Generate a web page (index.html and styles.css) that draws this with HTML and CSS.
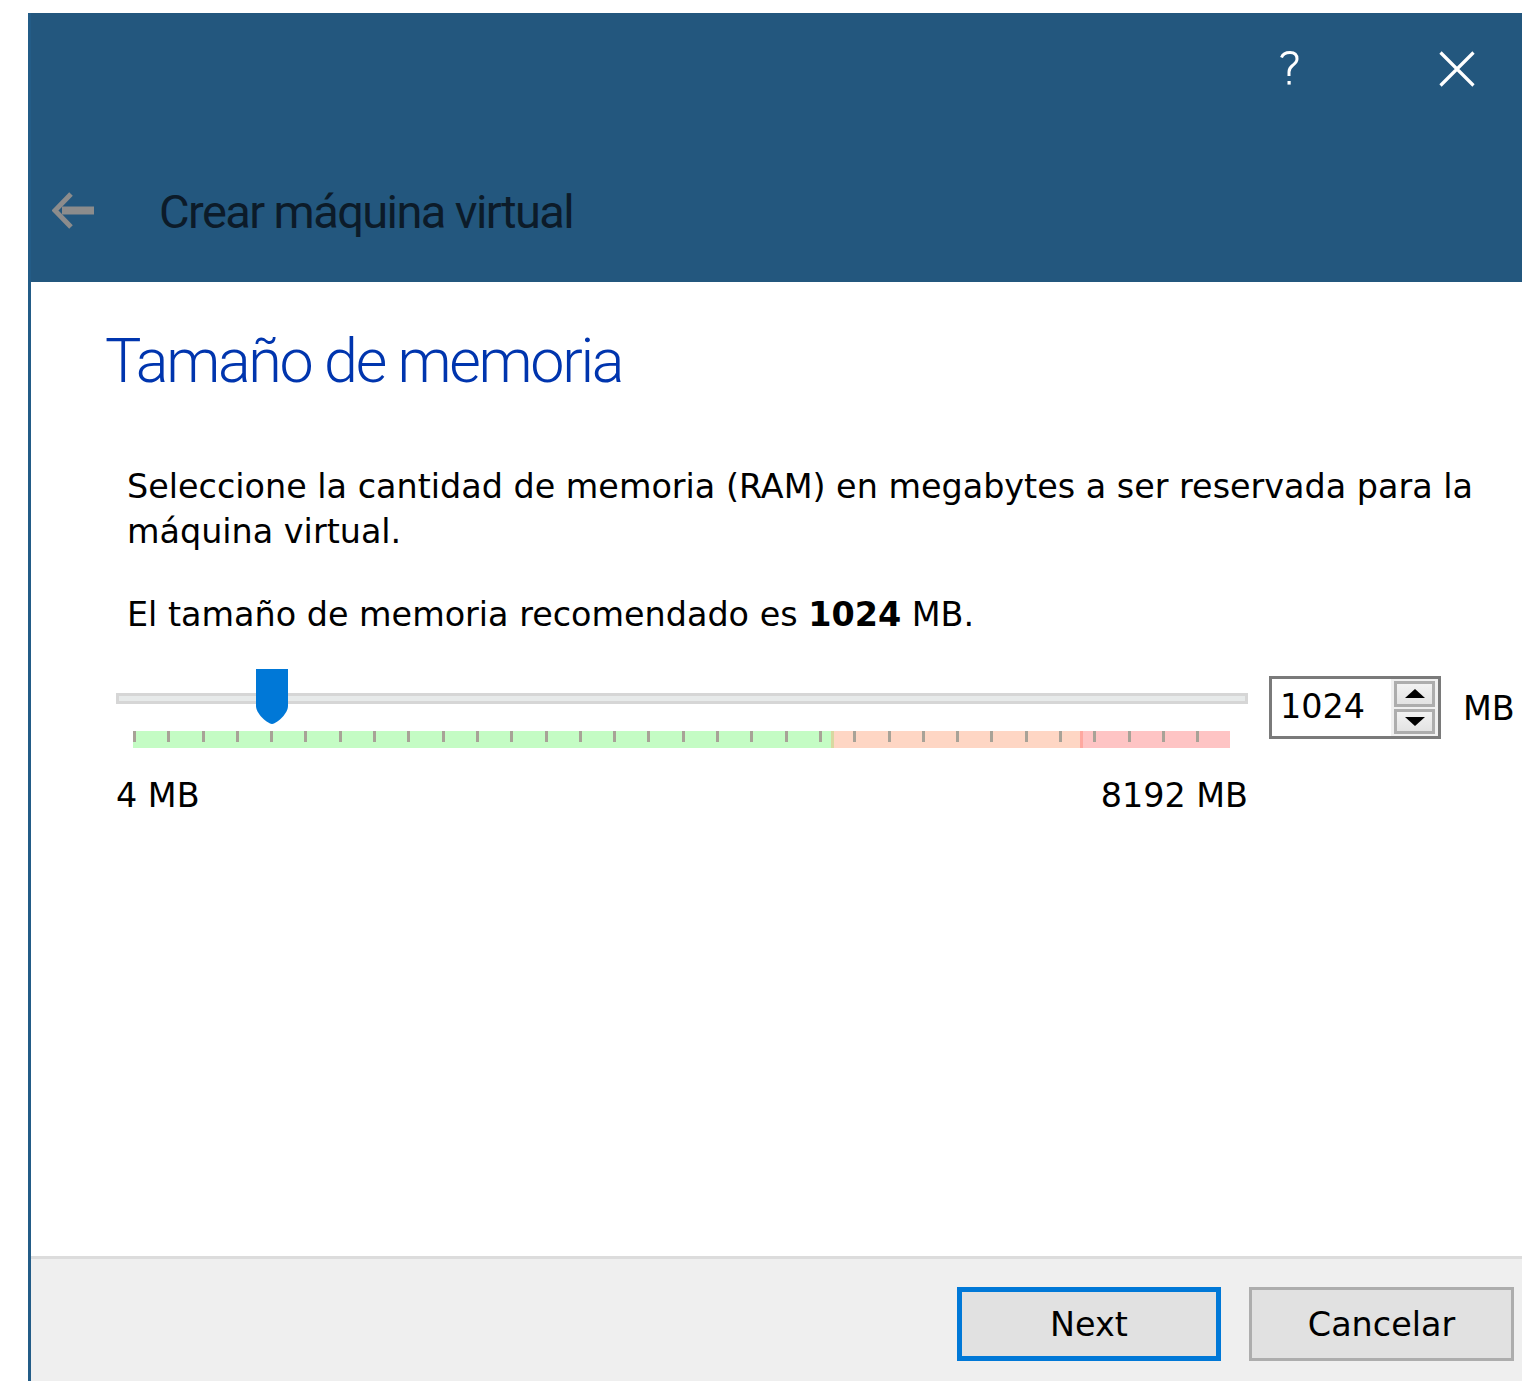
FILE: index.html
```html
<!DOCTYPE html>
<html lang="es">
<head>
<meta charset="utf-8">
<title>Crear máquina virtual</title>
<link rel="stylesheet" href="styles.css">
</head>
<body>
<div class="dialog">
  <header class="wizard-header">
    <div class="caption-buttons">
      <button class="caption-btn help" aria-label="Ayuda">
        <svg width="20" height="36" viewBox="0 0 20 36">
          <path d="M2.5 6.5 C4 2.5 8 1.5 11 1.5 C15.5 1.5 18 4 18 8 C18 11 16 12.5 13.5 14.5 C11 16.5 10 18 10 21 V25" fill="none" stroke="#fff" stroke-width="3"/>
          <rect x="8.5" y="30" width="3.2" height="3.6" fill="#fff"/>
        </svg>
      </button>
      <button class="caption-btn close" aria-label="Cerrar">
        <svg width="36" height="36" viewBox="0 0 36 36">
          <path d="M1.5 1.5 L34.5 34.5 M34.5 1.5 L1.5 34.5" stroke="#fff" stroke-width="3.2" fill="none"/>
        </svg>
      </button>
    </div>
    <div class="header-title-row">
      <button class="back-btn" aria-label="Atrás">
        <svg width="44" height="40" viewBox="0 0 44 40">
          <path d="M10 18.5 H42" stroke="#8c8c8c" stroke-width="8" fill="none"/>
          <path d="M19 2 L3 18.5 L19 35" stroke="#8c8c8c" stroke-width="5" fill="none" stroke-linejoin="miter"/>
        </svg>
      </button>
      <span class="header-title">Crear máquina virtual</span>
    </div>
  </header>

  <main class="page">
    <h1 class="page-title">Tamaño de memoria</h1>
    <p class="text">Seleccione la cantidad de memoria (RAM) en megabytes a ser reservada para la máquina virtual.</p>
    <p class="text recommended">El tamaño de memoria recomendado es <b>1024</b> MB.</p>

    <div class="memory-row">
      <div class="slider">
        <div class="track">
          <svg class="handle" width="32" height="56" viewBox="0 0 32 56">
            <path d="M0 0 H32 V37 C32 44 22 54 16 55 C10 54 0 44 0 37 Z" fill="#0078d7"/>
          </svg>
        </div>
        <div class="scale">
          <div class="zone ok" style="width: 698px"></div>
          <div class="zone warn" style="width: 249px"></div>
          <div class="zone bad" style="width: 150px"></div>
          <div class="ticks">
            <i></i><i></i><i></i><i></i><i></i><i></i><i></i><i></i>
            <i></i><i></i><i></i><i></i><i></i><i></i><i></i><i></i>
            <i></i><i></i><i></i><i></i><i></i><i></i><i></i><i></i>
            <i></i><i></i><i></i><i></i><i></i><i></i><i></i><i></i>
          </div>
        </div>
        <div class="limits">
          <span>4 MB</span>
          <span>8192 MB</span>
        </div>
      </div>

      <div class="spinbox">
        <span class="spin-value">1024</span>
        <div class="spin-buttons">
          <button class="spin-btn up" aria-label="Aumentar"><span class="tri up"></span></button>
          <button class="spin-btn down" aria-label="Disminuir"><span class="tri down"></span></button>
        </div>
      </div>
      <span class="unit">MB</span>
    </div>
  </main>

  <footer class="wizard-footer">
    <button class="btn primary">Next</button>
    <button class="btn">Cancelar</button>
  </footer>
</div>
</body>
</html>
```

FILE: styles.css
```css
* {
  box-sizing: border-box;
}

html, body {
  margin: 0;
  padding: 0;
  background: #ffffff;
  overflow: hidden;
}

body {
  width: 1522px;
  height: 1381px;
  font-family: "DejaVu Sans", sans-serif;
}

button {
  font: inherit;
  margin: 0;
  padding: 0;
  border: none;
  background: none;
  color: inherit;
}

.dialog {
  margin: 13px 0 0 28px;
  width: 1494px;
  height: 1368px;
  border-left: 3px solid #235c87;
  display: flex;
  flex-direction: column;
  overflow: hidden;
}

/* ---- blue wizard header ---- */
.wizard-header {
  height: 269px;
  margin-left: -3px;
  background: #23577e;
  display: flex;
  flex-direction: column;
  flex: none;
}

.caption-buttons {
  display: flex;
  justify-content: flex-end;
  gap: 140px;
  padding: 38px 47px 0 0;
}

.caption-btn {
  display: flex;
  height: 36px;
}

.header-title-row {
  display: flex;
  align-items: center;
  margin-top: 101px;
}

.back-btn {
  display: flex;
  margin-left: 24px;
}

.header-title {
  margin-left: 63px;
  font-family: "Roboto", "Open Sans", sans-serif;
  font-size: 47px;
  letter-spacing: -1.6px;
  color: #0c1b29;
  line-height: 1;
}

/* ---- page body ---- */
.page {
  flex: 1;
  padding: 0 0 0 74px;
  color: #000;
}

.page-title {
  margin: 39px 0 0 0;
  font-family: "Roboto", "Open Sans", sans-serif;
  font-weight: 300;
  font-size: 61px;
  letter-spacing: -2.3px;
  line-height: 80px;
  color: #0035ae;
}

.text {
  margin: 0 0 0 22px;
  font-size: 33.4px;
  line-height: 45px;
  width: 1400px;
}

.page-title + .text {
  margin-top: 63px;
}

.recommended {
  margin-top: 38px;
}

.recommended b {
  font-weight: 700;
}

.memory-row {
  display: flex;
  align-items: flex-start;
  margin-top: 32px;
  margin-left: 11px;
}

.slider {
  width: 1132px;
  display: flex;
  flex-direction: column;
}

.track {
  position: relative;
  margin-top: 24px;
  height: 11px;
  border: 3px solid #d6d6d6;
  background: #e7eaea;
}

.handle {
  position: absolute;
  left: 137px;
  top: -27px;
}

.scale {
  position: relative;
  display: flex;
  margin: 27px 0 0 17px;
  width: 1097px;
  height: 17px;
}

.zone.ok {
  background: #c4fcc4;
}

.zone.warn {
  background: #fed6c4;
  border-left: 3px solid #d8d8a0;
}

.zone.bad {
  background: #fec4c4;
  border-left: 3px solid #fea8a0;
}

.ticks {
  position: absolute;
  inset: 0;
  display: flex;
  gap: 31.3px;
}

.ticks i {
  width: 3px;
  height: 11px;
  background: #a8a297;
  flex: none;
}

.limits {
  display: flex;
  justify-content: space-between;
  margin-top: 28px;
  font-size: 33.4px;
  line-height: 40px;
}

.spinbox {
  margin-left: 21px;
  margin-top: 7px;
  width: 172px;
  height: 63px;
  border: 3px solid #7a7a7a;
  background: #fff;
  display: flex;
}

.spin-value {
  flex: 1;
  padding-left: 8px;
  font-size: 33.4px;
  line-height: 56px;
}

.spin-buttons {
  width: 47px;
  background: #f0f0f0;
  display: flex;
  flex-direction: column;
  gap: 2px;
  padding: 2px 3px 2px 3px;
}

.spin-btn {
  flex: 1;
  border: 3px solid #adadad;
  background: linear-gradient(#f2f2f2, #e3e3e3);
  display: flex;
  align-items: center;
  justify-content: center;
}

.tri {
  width: 0;
  height: 0;
  border-left: 10px solid transparent;
  border-right: 10px solid transparent;
}

.tri.up {
  border-bottom: 9px solid #000;
}

.tri.down {
  border-top: 9px solid #000;
}

.unit {
  margin-left: 22px;
  margin-top: 12px;
  font-size: 33.4px;
  line-height: 56px;
}

/* ---- footer ---- */
.wizard-footer {
  flex: none;
  height: 125px;
  border-top: 3px solid #dcdcdc;
  background: #efefef;
  display: flex;
  justify-content: flex-end;
  align-items: flex-start;
  gap: 28px;
  padding: 28px 8px 0 0;
}

.btn {
  width: 265px;
  height: 74px;
  border: 3px solid #adadad;
  background: #e1e1e1;
  font-size: 33.4px;
  color: #000;
}

.btn.primary {
  width: 264px;
  border: 5px solid #0078d7;
}
```
